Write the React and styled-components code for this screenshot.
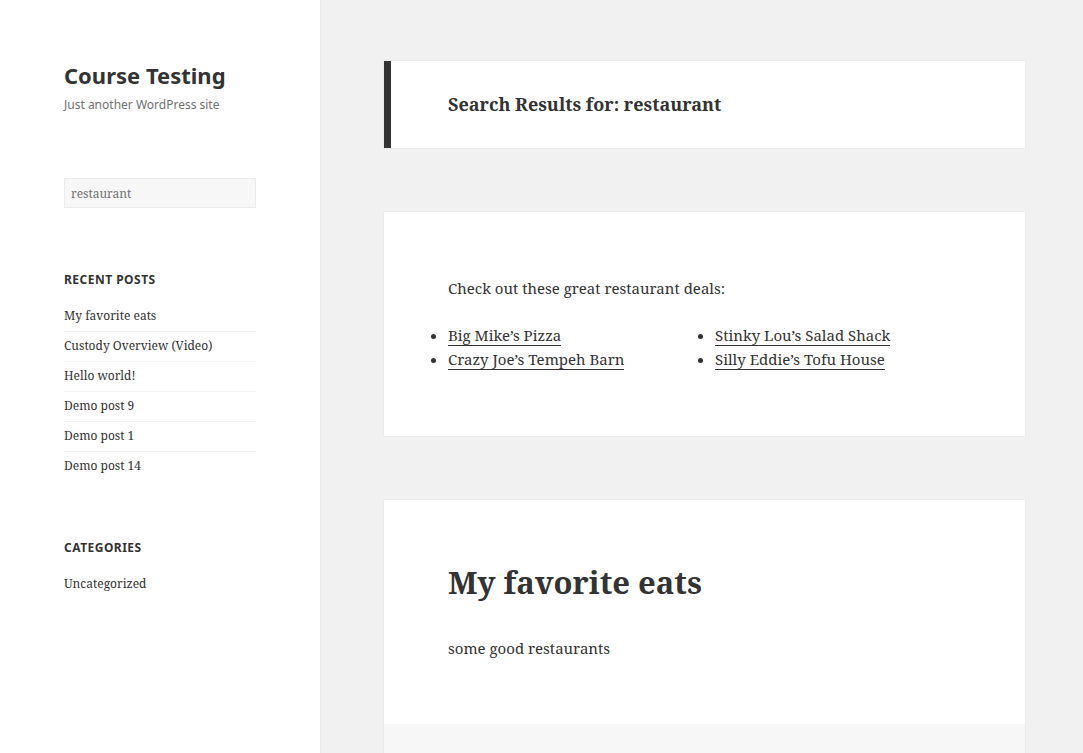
import React from 'react';
import styled, { createGlobalStyle } from 'styled-components';

const GlobalStyle = createGlobalStyle`
  html, body {
    margin: 0;
    padding: 0;
    background: #f1f1f1;
    color: #333;
    font-family: "Noto Serif", "DejaVu Serif", serif;
  }
  * { box-sizing: border-box; }
`;

const Page = styled.div`
  display: flex;
  min-height: 753px;
`;

const Sidebar = styled.aside`
  width: 320px;
  flex-shrink: 0;
  background: #fff;
  box-shadow: 0 0 1px rgba(0, 0, 0, 0.15);
  padding: 60px 64px 0;
`;

const SiteTitle = styled.h1`
  margin: 0;
  font-family: "Noto Sans", sans-serif;
  font-size: 22px;
  font-weight: 700;
  line-height: 30px;
  color: #333;
`;

const SiteDescription = styled.p`
  margin: 7px 0 0;
  font-family: "Noto Sans", sans-serif;
  font-size: 12px;
  line-height: 16px;
  color: #707070;
`;

const SearchInput = styled.input`
  display: block;
  width: 192px;
  height: 30px;
  margin-top: 65px;
  padding: 0 6px;
  background: #f7f7f7;
  border: 1px solid #eaeaea;
  font-family: "Noto Serif", "DejaVu Serif", serif;
  font-size: 12px;
  color: #707070;
  outline: none;
`;

const Widget = styled.section`
  margin-top: ${p => p.$top}px;
`;

const WidgetTitle = styled.h2`
  margin: 0 0 19px;
  font-family: "Noto Sans", sans-serif;
  font-size: 12px;
  font-weight: 700;
  line-height: 16px;
  letter-spacing: 0.04em;
  text-transform: uppercase;
  color: #333;
`;

const WidgetList = styled.ul`
  list-style: none;
  margin: 0;
  padding: 0;
  width: 192px;
`;

const WidgetItem = styled.li`
  font-size: 12px;
  line-height: 18px;
  padding: ${p => (p.$first ? '0 0 6px' : '5px 0 6px')};
  border-top: ${p => (p.$first ? 'none' : '1px solid #f1f1f1')};
  color: #333;
`;

const Main = styled.main`
  flex: 1;
  display: flex;
  flex-direction: column;
  gap: 64px;
  padding: 61px 58px 0 64px;
`;

const Card = styled.article`
  background: #fff;
  box-shadow: 0 0 1px rgba(0, 0, 0, 0.15);
`;

const HeaderCard = styled(Card)`
  border-left: 7px solid #333;
  padding: 29px 57px 30px;
`;

const PageTitle = styled.h1`
  margin: 0;
  font-size: 18px;
  font-weight: 700;
  line-height: 28px;
  color: #333;
`;

const EntryContent = styled.div`
  padding: ${p => p.$pad};
`;

const Paragraph = styled.p`
  margin: ${p => p.$top || 0}px 0 0;
  font-size: 15px;
  line-height: 24px;
  color: #333;
`;

const Columns = styled.div`
  display: grid;
  grid-template-columns: 267px 1fr;
  margin-top: 23px;
`;

const DealList = styled.ul`
  margin: 0;
  padding: 0;
  list-style: none;
`;

const Deal = styled.li`
  position: relative;
  font-size: 15px;
  line-height: 24px;

  &::before {
    content: '';
    position: absolute;
    left: -17px;
    top: 11px;
    width: 5px;
    height: 5px;
    border-radius: 50%;
    background: #333;
  }
`;

const DealLink = styled.a`
  color: #333;
  text-decoration: none;
  border-bottom: 1px solid #333;
`;

const EntryTitle = styled.h2`
  margin: 0;
  font-size: 31px;
  font-weight: 700;
  line-height: 40px;
  color: #333;
`;

const EntryFooter = styled.footer`
  background: #f7f7f7;
  height: 40px;
`;

const recent = [
  'My favorite eats',
  'Custody Overview (Video)',
  'Hello world!',
  'Demo post 9',
  'Demo post 1',
  'Demo post 14',
];

const App = () => (
  <>
    <GlobalStyle />
    <Page>
      <Sidebar>
        <SiteTitle>Course Testing</SiteTitle>
        <SiteDescription>Just another WordPress site</SiteDescription>
        <SearchInput defaultValue="restaurant" />

        <Widget $top={64}>
          <WidgetTitle>Recent Posts</WidgetTitle>
          <WidgetList>
            {recent.map((t, i) => (
              <WidgetItem key={t} $first={i === 0}>{t}</WidgetItem>
            ))}
          </WidgetList>
        </Widget>

        <Widget $top={59}>
          <WidgetTitle>Categories</WidgetTitle>
          <WidgetList>
            <WidgetItem $first>Uncategorized</WidgetItem>
          </WidgetList>
        </Widget>
      </Sidebar>

      <Main>
        <HeaderCard>
          <PageTitle>Search Results for: restaurant</PageTitle>
        </HeaderCard>

        <Card>
          <EntryContent $pad="64px 64px 65px">
            <Paragraph>Check out these great restaurant deals:</Paragraph>
            <Columns>
              <DealList>
                <Deal><DealLink href="#">Big Mike’s Pizza</DealLink></Deal>
                <Deal><DealLink href="#">Crazy Joe’s Tempeh Barn</DealLink></Deal>
              </DealList>
              <DealList>
                <Deal><DealLink href="#">Stinky Lou’s Salad Shack</DealLink></Deal>
                <Deal><DealLink href="#">Silly Eddie’s Tofu House</DealLink></Deal>
              </DealList>
            </Columns>
          </EntryContent>
        </Card>

        <Card>
          <EntryContent $pad="62px 64px 64px">
            <EntryTitle>My favorite eats</EntryTitle>
            <Paragraph $top={34}>some good restaurants</Paragraph>
          </EntryContent>
          <EntryFooter />
        </Card>
      </Main>
    </Page>
  </>
);

export default App;
